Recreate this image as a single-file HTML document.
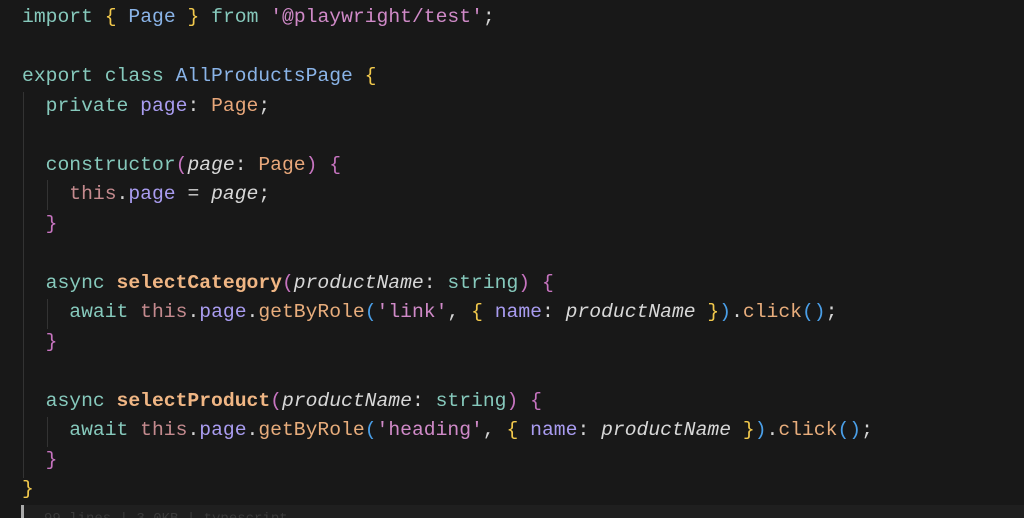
<!DOCTYPE html>
<html><head><style>
html,body{margin:0;padding:0;background:#181818;width:1024px;height:518px;overflow:hidden}
.code{position:absolute;left:22px;top:3px;font-family:"Liberation Mono",monospace;font-size:19.7px;line-height:29.5px;color:#d4d4d4;white-space:pre}
.k{color:#86c9bc}.t{color:#8ab4e8}.y{color:#f2c94c}.s{color:#d08ac8}.p{color:#a99cf0}.o{color:#e8a77a}
.th{color:#c48a8e}.f{color:#e8ad7c}.b{color:#4a9fe8}.m{color:#c774c0}.i{font-style:italic;color:#d8d8d8}.fb{color:#f0b684;font-weight:bold}
.g{position:absolute;width:1px;background:#333}
.bar{position:absolute;left:24px;top:505px;width:1000px;height:13px;background:#1f1f1f;overflow:hidden}
</style></head><body>
<div class="g" style="left:23px;top:92px;height:386px"></div>
<div class="g" style="left:47px;top:180px;height:30px"></div>
<div class="g" style="left:47px;top:299px;height:30px"></div>
<div class="g" style="left:47px;top:417px;height:30px"></div>
<div class="bar"><span style="position:absolute;left:20px;top:6px;font:14px 'Liberation Mono',monospace;color:#3a3a3a">99 lines | 3.0KB | typescript</span></div>
<div style="position:absolute;left:21px;top:505px;width:3px;height:13px;background:#aaa"></div>
<div class="code"><span class="k">import</span> <span class="y">{</span> <span class="t">Page</span> <span class="y">}</span> <span class="k">from</span> <span class="s">'@playwright/test'</span>;

<span class="k">export class</span> <span class="t">AllProductsPage</span> <span class="y">{</span>
  <span class="k">private</span> <span class="p">page</span>: <span class="o">Page</span>;

  <span class="k">constructor</span><span class="m">(</span><span class="i">page</span>: <span class="o">Page</span><span class="m">)</span> <span class="m">{</span>
    <span class="th">this</span>.<span class="p">page</span> = <span class="i">page</span>;
  <span class="m">}</span>

  <span class="k">async</span> <span class="fb">selectCategory</span><span class="m">(</span><span class="i">productName</span>: <span class="k">string</span><span class="m">)</span> <span class="m">{</span>
    <span class="k">await</span> <span class="th">this</span>.<span class="p">page</span>.<span class="f">getByRole</span><span class="b">(</span><span class="s">'link'</span>, <span class="y">{</span> <span class="p">name</span>: <span class="i">productName</span> <span class="y">}</span><span class="b">)</span>.<span class="f">click</span><span class="b">()</span>;
  <span class="m">}</span>

  <span class="k">async</span> <span class="fb">selectProduct</span><span class="m">(</span><span class="i">productName</span>: <span class="k">string</span><span class="m">)</span> <span class="m">{</span>
    <span class="k">await</span> <span class="th">this</span>.<span class="p">page</span>.<span class="f">getByRole</span><span class="b">(</span><span class="s">'heading'</span>, <span class="y">{</span> <span class="p">name</span>: <span class="i">productName</span> <span class="y">}</span><span class="b">)</span>.<span class="f">click</span><span class="b">()</span>;
  <span class="m">}</span>
<span class="y">}</span></div>
</body></html>
